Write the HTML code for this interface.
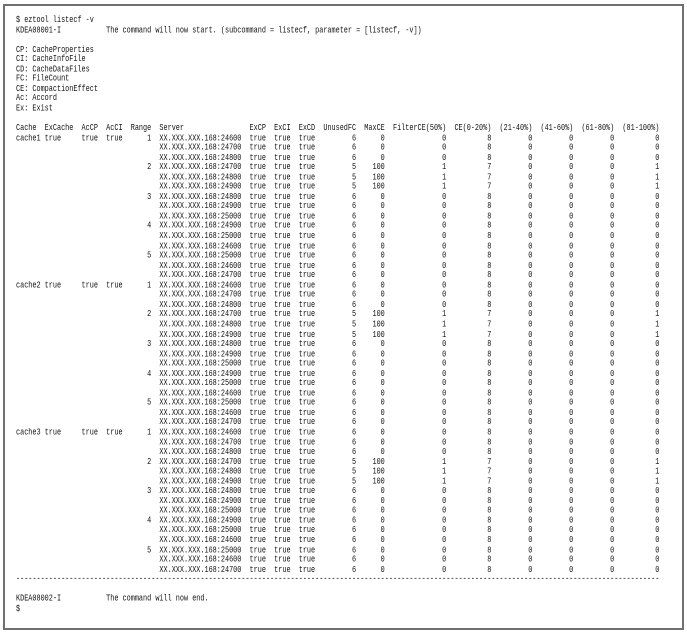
<!DOCTYPE html>
<html><head><meta charset="utf-8">
<style>
html,body{margin:0;padding:0;background:#fff;width:687px;height:636px;overflow:hidden;}
.box{position:absolute;left:3px;top:4px;width:677px;height:622px;border:2px solid #707070;}
pre{position:absolute;left:16px;top:17px;margin:0;font-family:"Liberation Mono",monospace;font-size:6.83px;line-height:7.54px;color:#111;white-space:pre;transform:scaleY(1.3);transform-origin:0 0;}
</style></head><body>
<div class="box"></div>
<pre>$ eztool listecf -v
KDEA08001-I           The command will now start. (subcommand = listecf, parameter = [listecf, -v])

CP: CacheProperties
CI: CacheInfoFile
CD: CacheDataFiles
FC: FileCount
CE: CompactionEffect
Ac: Accord
Ex: Exist

Cache  ExCache  AcCP  AcCI  Range  Server                ExCP  ExCI  ExCD  UnusedFC  MaxCE  FilterCE(50%)  CE(0-20%)  (21-40%)  (41-60%)  (61-80%)  (81-100%)
cache1 true     true  true      1  XX.XXX.XXX.168:24600  true  true  true         6      0              0          8         0         0         0          0
                                   XX.XXX.XXX.168:24700  true  true  true         6      0              0          8         0         0         0          0
                                   XX.XXX.XXX.168:24800  true  true  true         6      0              0          8         0         0         0          0
                                2  XX.XXX.XXX.168:24700  true  true  true         5    100              1          7         0         0         0          1
                                   XX.XXX.XXX.168:24800  true  true  true         5    100              1          7         0         0         0          1
                                   XX.XXX.XXX.168:24900  true  true  true         5    100              1          7         0         0         0          1
                                3  XX.XXX.XXX.168:24800  true  true  true         6      0              0          8         0         0         0          0
                                   XX.XXX.XXX.168:24900  true  true  true         6      0              0          8         0         0         0          0
                                   XX.XXX.XXX.168:25000  true  true  true         6      0              0          8         0         0         0          0
                                4  XX.XXX.XXX.168:24900  true  true  true         6      0              0          8         0         0         0          0
                                   XX.XXX.XXX.168:25000  true  true  true         6      0              0          8         0         0         0          0
                                   XX.XXX.XXX.168:24600  true  true  true         6      0              0          8         0         0         0          0
                                5  XX.XXX.XXX.168:25000  true  true  true         6      0              0          8         0         0         0          0
                                   XX.XXX.XXX.168:24600  true  true  true         6      0              0          8         0         0         0          0
                                   XX.XXX.XXX.168:24700  true  true  true         6      0              0          8         0         0         0          0
cache2 true     true  true      1  XX.XXX.XXX.168:24600  true  true  true         6      0              0          8         0         0         0          0
                                   XX.XXX.XXX.168:24700  true  true  true         6      0              0          8         0         0         0          0
                                   XX.XXX.XXX.168:24800  true  true  true         6      0              0          8         0         0         0          0
                                2  XX.XXX.XXX.168:24700  true  true  true         5    100              1          7         0         0         0          1
                                   XX.XXX.XXX.168:24800  true  true  true         5    100              1          7         0         0         0          1
                                   XX.XXX.XXX.168:24900  true  true  true         5    100              1          7         0         0         0          1
                                3  XX.XXX.XXX.168:24800  true  true  true         6      0              0          8         0         0         0          0
                                   XX.XXX.XXX.168:24900  true  true  true         6      0              0          8         0         0         0          0
                                   XX.XXX.XXX.168:25000  true  true  true         6      0              0          8         0         0         0          0
                                4  XX.XXX.XXX.168:24900  true  true  true         6      0              0          8         0         0         0          0
                                   XX.XXX.XXX.168:25000  true  true  true         6      0              0          8         0         0         0          0
                                   XX.XXX.XXX.168:24600  true  true  true         6      0              0          8         0         0         0          0
                                5  XX.XXX.XXX.168:25000  true  true  true         6      0              0          8         0         0         0          0
                                   XX.XXX.XXX.168:24600  true  true  true         6      0              0          8         0         0         0          0
                                   XX.XXX.XXX.168:24700  true  true  true         6      0              0          8         0         0         0          0
cache3 true     true  true      1  XX.XXX.XXX.168:24600  true  true  true         6      0              0          8         0         0         0          0
                                   XX.XXX.XXX.168:24700  true  true  true         6      0              0          8         0         0         0          0
                                   XX.XXX.XXX.168:24800  true  true  true         6      0              0          8         0         0         0          0
                                2  XX.XXX.XXX.168:24700  true  true  true         5    100              1          7         0         0         0          1
                                   XX.XXX.XXX.168:24800  true  true  true         5    100              1          7         0         0         0          1
                                   XX.XXX.XXX.168:24900  true  true  true         5    100              1          7         0         0         0          1
                                3  XX.XXX.XXX.168:24800  true  true  true         6      0              0          8         0         0         0          0
                                   XX.XXX.XXX.168:24900  true  true  true         6      0              0          8         0         0         0          0
                                   XX.XXX.XXX.168:25000  true  true  true         6      0              0          8         0         0         0          0
                                4  XX.XXX.XXX.168:24900  true  true  true         6      0              0          8         0         0         0          0
                                   XX.XXX.XXX.168:25000  true  true  true         6      0              0          8         0         0         0          0
                                   XX.XXX.XXX.168:24600  true  true  true         6      0              0          8         0         0         0          0
                                5  XX.XXX.XXX.168:25000  true  true  true         6      0              0          8         0         0         0          0
                                   XX.XXX.XXX.168:24600  true  true  true         6      0              0          8         0         0         0          0
                                   XX.XXX.XXX.168:24700  true  true  true         6      0              0          8         0         0         0          0
-------------------------------------------------------------------------------------------------------------------------------------------------------------

KDEA08002-I           The command will now end.
$</pre>
</body></html>
